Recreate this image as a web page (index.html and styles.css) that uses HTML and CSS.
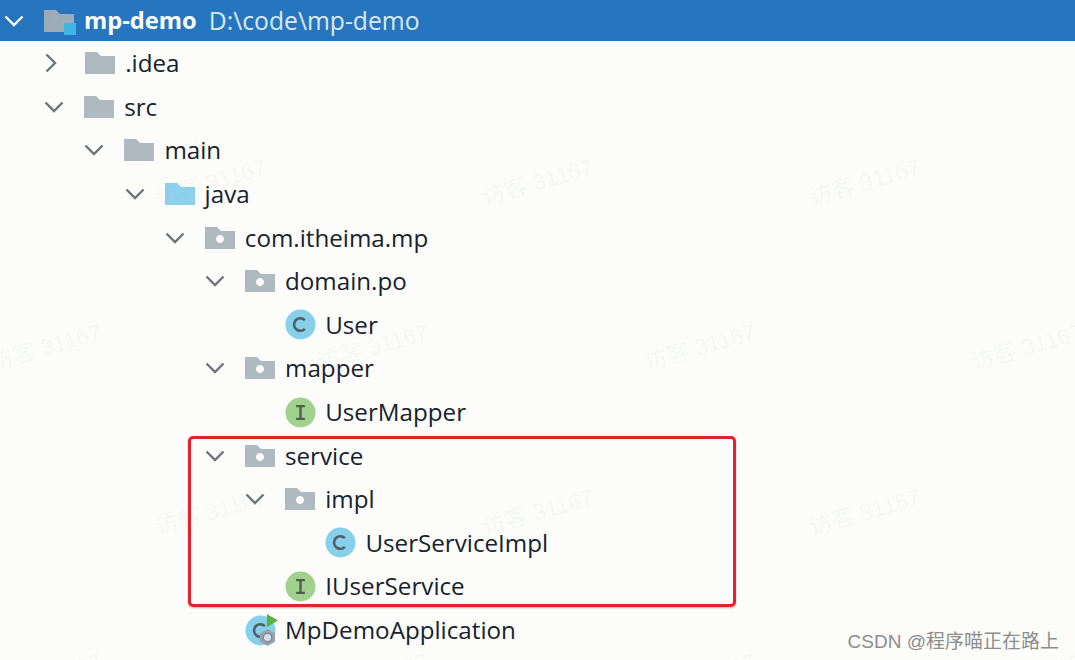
FILE: index.html
```html
<!DOCTYPE html>
<html lang="zh">
<head>
<meta charset="utf-8">
<title>mp-demo</title>
<link rel="stylesheet" href="styles.css">
</head>
<body>
<svg class="defs" width="0" height="0" aria-hidden="true">
  <symbol id="folder" viewBox="0 0 30 24"><path d="M0 1h12l4 4h14v18H0z"/></symbol>
  <symbol id="pkg" viewBox="0 0 30 24"><path fill-rule="evenodd" d="M0 1h12l4 4h14v18H0zM15 9a4 4 0 1 0 .01 0z"/></symbol>
  <symbol id="down" viewBox="0 0 20 12"><path d="M1.5 1.5 10 10l8.500-8.500" fill="none" stroke="currentColor" stroke-width="2.400"/></symbol>
  <symbol id="right" viewBox="0 0 12 20"><path d="M1.500 1.500 10 10l-8.500 8.500" fill="none" stroke="currentColor" stroke-width="2.400"/></symbol>
  <symbol id="cls" viewBox="0 0 32 32"><circle cx="16" cy="16" r="15.500" fill="#86d0ea"/><path d="M20.500 11.500a6.500 6.500 0 1 0 0 9" fill="none" stroke="#4f5c66" stroke-width="2.600"/></symbol>
  <symbol id="ifc" viewBox="0 0 32 32"><circle cx="16" cy="16" r="15.500" fill="#a0d28d"/><path d="M11.500 9.500h9M11.500 22.500h9M16 9.500v13" fill="none" stroke="#4f5c50" stroke-width="2.400"/></symbol>
</svg>
<main class="tree">
  <div class="row root l0"><svg class="chev"><use href="#down"/></svg>
    <span class="icon"><svg class="fold root-fold"><use href="#folder"/></svg><i class="module-mark"></i></span>
    <span class="name strong">mp-demo</span><span class="path">D:\code\mp-demo</span></div>
  <div class="row l1"><svg class="chev side"><use href="#right"/></svg><span class="icon"><svg class="fold"><use href="#folder"/></svg></span><span class="name">.idea</span></div>
  <div class="row l1"><svg class="chev"><use href="#down"/></svg><span class="icon"><svg class="fold"><use href="#folder"/></svg></span><span class="name">src</span></div>
  <div class="row l2"><svg class="chev"><use href="#down"/></svg><span class="icon"><svg class="fold"><use href="#folder"/></svg></span><span class="name">main</span></div>
  <div class="row l3"><svg class="chev"><use href="#down"/></svg><span class="icon"><svg class="fold src"><use href="#folder"/></svg></span><span class="name">java</span></div>
  <div class="row l4"><svg class="chev"><use href="#down"/></svg><span class="icon"><svg class="fold"><use href="#pkg"/></svg></span><span class="name">com.itheima.mp</span></div>
  <div class="row l5"><svg class="chev"><use href="#down"/></svg><span class="icon"><svg class="fold"><use href="#pkg"/></svg></span><span class="name">domain.po</span></div>
  <div class="row l6"><span class="chev-gap"></span><span class="icon"><svg class="badge"><use href="#cls"/></svg></span><span class="name">User</span></div>
  <div class="row l5"><svg class="chev"><use href="#down"/></svg><span class="icon"><svg class="fold"><use href="#pkg"/></svg></span><span class="name">mapper</span></div>
  <div class="row l6"><span class="chev-gap"></span><span class="icon"><svg class="badge"><use href="#ifc"/></svg></span><span class="name">UserMapper</span></div>
  <div class="row l5"><svg class="chev"><use href="#down"/></svg><span class="icon"><svg class="fold"><use href="#pkg"/></svg></span><span class="name">service</span></div>
  <div class="row l6"><svg class="chev"><use href="#down"/></svg><span class="icon"><svg class="fold"><use href="#pkg"/></svg></span><span class="name">impl</span></div>
  <div class="row l7"><span class="chev-gap"></span><span class="icon"><svg class="badge"><use href="#cls"/></svg></span><span class="name">UserServiceImpl</span></div>
  <div class="row l6"><span class="chev-gap"></span><span class="icon"><svg class="badge"><use href="#ifc"/></svg></span><span class="name">IUserService</span></div>
  <div class="row l5"><span class="chev-gap"></span><span class="icon">
    <svg class="badge"><use href="#cls"/></svg>
    <svg class="run-mark" viewBox="0 0 14 16"><path d="M1 1l12 7-12 7z"/></svg>
    <svg class="boot-mark" viewBox="0 0 20 20"><path d="M10 1l8 4.500v9L10 19l-8-4.500v-9z" fill="#9aa3aa"/><circle cx="10" cy="10" r="4.500" fill="#cfe3ea" stroke="#7f8a92" stroke-width="1.500"/></svg>
  </span><span class="name">MpDemoApplication</span></div>
</main>
<div class="highlight"></div>
<div class="marks" aria-hidden="true">
  <div class="mark-row"><span>访客 31167</span><span>访客 31167</span><span>访客 31167</span><span>访客 31167</span></div>
  <div class="mark-row shifted"><span>访客 31167</span><span>访客 31167</span><span>访客 31167</span></div>
  <div class="mark-row"><span>访客 31167</span><span>访客 31167</span><span>访客 31167</span><span>访客 31167</span></div>
  <div class="mark-row shifted"><span>访客 31167</span><span>访客 31167</span><span>访客 31167</span></div>
  <div class="mark-row"><span>访客 31167</span><span>访客 31167</span><span>访客 31167</span><span>访客 31167</span></div>
</div>
<div class="credit">CSDN @程序喵正在路上</div>
</body>
</html>
```
FILE: styles.css
```css
* { box-sizing: border-box; }
html, body { margin: 0; height: 100%; }
body {
  position: relative;
  width: 1075px;
  height: 660px;
  overflow: hidden;
  background: #fcfdfb;
  color: #17222e;
  font-family: "Open Sans", "Noto Sans CJK SC", sans-serif;
}
.defs { position: absolute; }
.tree { display: flex; flex-direction: column; }
.row {
  display: flex;
  align-items: center;
  height: 43.6px;
  font-size: 24.2px;
  white-space: nowrap;
}
.root {
  height: 41px;
  margin-bottom: 0.5px;
  background: #2675bf;
  color: #fff;
}
.name { position: relative; top: -0.5px; }
.l0 { padding-left: 4px; }
.l1 { padding-left: 44.200px; }
.l2 { padding-left: 84.400px; }
.l3 { padding-left: 124.600px; }
.l4 { padding-left: 164.800px; }
.l5 { padding-left: 205px; }
.l6 { padding-left: 245.200px; }
.l7 { padding-left: 285.400px; }
.chev, .chev-gap { flex: 0 0 40px; }
.chev { width: 20px; height: 12px; max-width: 20px; margin-right: 20px; color: #6f7478; }
.chev.side { width: 12px; max-width: 12px; height: 20px; margin: 0 28px 0 1px; flex-basis: 12px; }
.root .chev { color: #fff; }
.icon { position: relative; display: flex; align-items: center; flex: 0 0 40px; height: 32px; }
.fold { width: 30px; height: 24px; fill: #aeb9c0; }
.fold.src { fill: #8ed1ec; }
.root-fold { fill: #9eacb8; }
.module-mark {
  position: absolute;
  left: 20px;
  top: 18px;
  width: 12px;
  height: 12px;
  background: #3fb5e3;
}
.badge { width: 31px; height: 31px; }
.run-mark { position: absolute; left: 21px; top: -1px; width: 13px; height: 15px; fill: #55b33b; }
.boot-mark { position: absolute; left: 13px; top: 14px; width: 19px; height: 19px; }
.strong { font-size: 23.700px; font-weight: 700; color: #fff; }
.path { position: relative; top: -0.5px; margin-left: 12px; font-size: 24.700px; color: #dce9f5; }
.highlight {
  position: absolute;
  left: 188px;
  top: 436px;
  width: 548px;
  height: 171px;
  border: 3px solid #e7202c;
  border-radius: 5px;
  box-shadow: 0 1px 2px rgba(80, 40, 40, .35);
}
.marks {
  position: absolute;
  inset: 0;
  display: flex;
  flex-direction: column;
  pointer-events: none;
}
.mark-row {
  flex: 0 0 165px;
  display: flex;
  gap: 219px;
  align-items: center;
  margin-left: -12px;
  margin-top: -67px;
  margin-bottom: 67px;
}
.mark-row.shifted { margin-left: 153px; }
.mark-row span {
  flex: 0 0 108px;
  min-width: 0;
  font-size: 23px;
  white-space: nowrap;
  color: rgba(90, 100, 110, .055);
  font-family: "Liberation Sans", "Noto Sans CJK SC", sans-serif;
  transform: rotate(-16deg);
}
.credit {
  position: absolute;
  right: 16px;
  bottom: 7px;
  font-family: "Liberation Sans", "Noto Sans CJK SC", sans-serif;
  font-size: 19px;
  color: #8c8c8c;
}
```
